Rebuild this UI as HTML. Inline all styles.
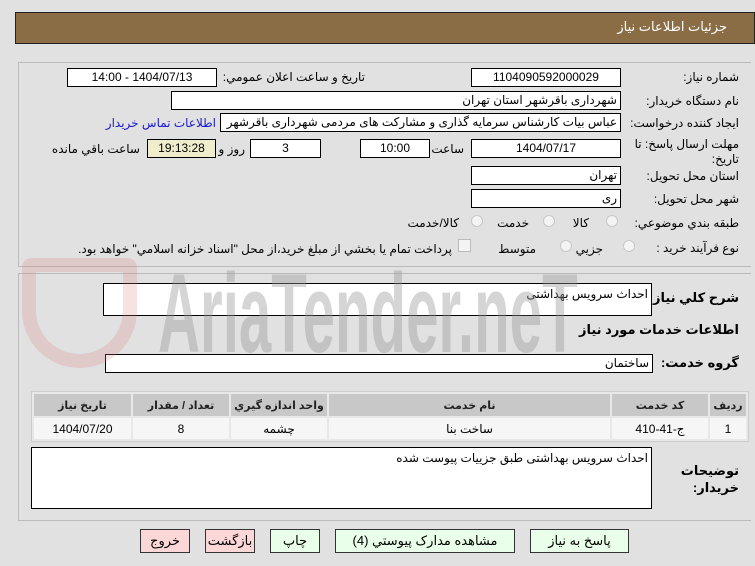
<!DOCTYPE html>
<html><head><meta charset="utf-8"><style>
*{box-sizing:border-box;margin:0;padding:0}
body{width:755px;height:566px;background:#e1e1e1;font-family:"Liberation Sans","DejaVu Sans",sans-serif;font-size:12px;color:#000;position:relative;overflow:hidden}
.a{position:absolute;white-space:nowrap}
.in{position:absolute;background:#fff;border:1px solid #000;height:19px;line-height:17px;padding:0 3px;direction:rtl;text-align:right;font-size:12px}
.c{text-align:center}
.l{position:absolute;white-space:nowrap;direction:rtl;text-align:right}
.rad{position:absolute;width:12px;height:12px;border:1px solid #c8c8c8;border-radius:50%;background:#f4f4f4}
.btn{position:absolute;height:24px;border:1px solid #333;line-height:22px;text-align:center;font-size:13px;background:#eaffea}
table{border-collapse:separate;border-spacing:2px;position:absolute;left:31px;top:391px;width:718px;background:#e8e8e8;border:1px solid #ccc}
th{background:#c8c8c8;height:22px;font-size:11px;font-weight:bold;color:#222;white-space:nowrap;padding:0}
td{background:#f6f6f6;height:21px;text-align:center;padding:0}
</style></head><body>
<div class="a" style="left:15px;top:12px;width:740px;height:32px;background:#8b6d45;border:1px solid #222"></div>
<div class="l" style="right:28px;top:19px;color:#fff;font-size:13px">جزئيات اطلاعات نياز</div>
<div class="a" style="left:18px;top:62px;width:733px;height:205px;border:1px solid #bbb;border-right:none"></div>
<div class="a" style="left:18px;top:273px;width:733px;height:248px;border:1px solid #bbb;border-right:none"></div>

<div class="l" style="right:16px;top:70px">شماره نياز:</div>
<div class="in c" style="left:471px;top:68px;width:150px">1104090592000029</div>
<div class="l" style="right:390px;top:70px">تاريخ و ساعت اعلان عمومي:</div>
<div class="in c" style="left:67px;top:68px;width:150px">1404/07/13 - 14:00</div>
<div class="l" style="right:16px;top:94px">نام دستگاه خريدار:</div>
<div class="in" style="left:171px;top:91px;width:450px">شهرداری باقرشهر استان تهران</div>
<div class="l" style="right:16px;top:116px">ايجاد کننده درخواست:</div>
<div class="in" style="left:220px;top:113px;width:401px">عباس بیات کارشناس سرمایه گذاری و مشارکت های مردمی شهرداری باقرشهر</div>
<div class="l" style="right:539px;top:116px;color:#1a1ad0">اطلاعات تماس خريدار</div>
<div class="l" style="right:16px;top:137px;line-height:15px">مهلت ارسال پاسخ: تا<br>تاريخ:</div>
<div class="in c" style="left:471px;top:139px;width:150px">1404/07/17</div>
<div class="l" style="right:291px;top:142px">ساعت</div>
<div class="in c" style="left:360px;top:139px;width:70px">10:00</div>
<div class="in c" style="left:250px;top:139px;width:71px">3</div>
<div class="l" style="right:510px;top:142px">روز و</div>
<div class="in c" style="left:147px;top:139px;width:69px;background:#efedcc">19:13:28</div>
<div class="l" style="right:615px;top:142px">ساعت باقي مانده</div>
<div class="l" style="right:16px;top:169px">استان محل تحويل:</div>
<div class="in" style="left:471px;top:166px;width:150px">تهران</div>
<div class="l" style="right:16px;top:192px">شهر محل تحويل:</div>
<div class="in" style="left:471px;top:189px;width:150px">ری</div>
<div class="l" style="right:16px;top:216px">طبقه بندي موضوعي:</div>
<div class="rad" style="left:606px;top:215px"></div><div class="l" style="right:166px;top:216px">کالا</div>
<div class="rad" style="left:543px;top:215px"></div><div class="l" style="right:226px;top:216px">خدمت</div>
<div class="rad" style="left:471px;top:215px"></div><div class="l" style="right:296px;top:216px">کالا/خدمت</div>
<div class="l" style="right:16px;top:241px">نوع فرآيند خريد :</div>
<div class="rad" style="left:623px;top:240px"></div><div class="l" style="right:152px;top:242px">جزيي</div>
<div class="rad" style="left:560px;top:240px"></div><div class="l" style="right:219px;top:242px">متوسط</div>
<div class="a" style="left:458px;top:239px;width:13px;height:13px;border:1px solid #bbb;background:#f4f4f4"></div>
<div class="l" style="right:303px;top:242px">پرداخت تمام يا بخشي از مبلغ خريد،از محل "اسناد خزانه اسلامي" خواهد بود.</div>

<div class="l" style="right:16px;top:290px;font-weight:bold;font-size:13px">شرح کلي نياز:</div>
<div class="in" style="left:103px;top:283px;width:549px;height:33px;line-height:20px">احداث سرویس بهداشتی</div>
<div class="l" style="right:16px;top:322px;font-weight:bold;font-size:13px">اطلاعات خدمات مورد نياز</div>
<div class="l" style="right:16px;top:355px;font-weight:bold;font-size:13px">گروه خدمت:</div>
<div class="in" style="left:105px;top:354px;width:548px">ساختمان</div>

<div class="a" style="left:158px;top:258px;font-size:112px;line-height:112px;font-weight:bold;color:rgba(150,150,150,0.4);transform:scaleX(0.52);transform-origin:left top;pointer-events:none">AriaTender.neT</div>
<div class="a" style="left:22px;top:258px;width:115px;height:110px;border:14px solid rgba(220,120,120,0.22);border-radius:10px 10px 60px 60px"></div>

<table dir="rtl"><tr><th style="width:36px">رديف</th><th style="width:96px">کد خدمت</th><th>نام خدمت</th><th style="width:96px">واحد اندازه گيري</th><th style="width:96px">تعداد / مقدار</th><th style="width:97px">تاريخ نياز</th></tr>
<tr><td>1</td><td>ج-41-410</td><td>ساخت بنا</td><td>چشمه</td><td>8</td><td>1404/07/20</td></tr></table>
<div class="l" style="right:16px;top:462px;font-weight:bold;font-size:13px;line-height:17px">توضيحات<br>خريدار:</div>
<div class="in" style="left:31px;top:447px;width:621px;height:62px;line-height:20px">احداث سرویس بهداشتی طبق جزییات پیوست شده</div>

<div class="btn" style="left:140px;top:529px;width:50px;background:#fcd7d7">خروج</div>
<div class="btn" style="left:205px;top:529px;width:50px;background:#fcd7d7">بازگشت</div>
<div class="btn" style="left:270px;top:529px;width:50px">چاپ</div>
<div class="btn" style="left:335px;top:529px;width:180px">مشاهده مدارک پيوستي (4)</div>
<div class="btn" style="left:530px;top:529px;width:99px">پاسخ به نياز</div>
</body></html>
